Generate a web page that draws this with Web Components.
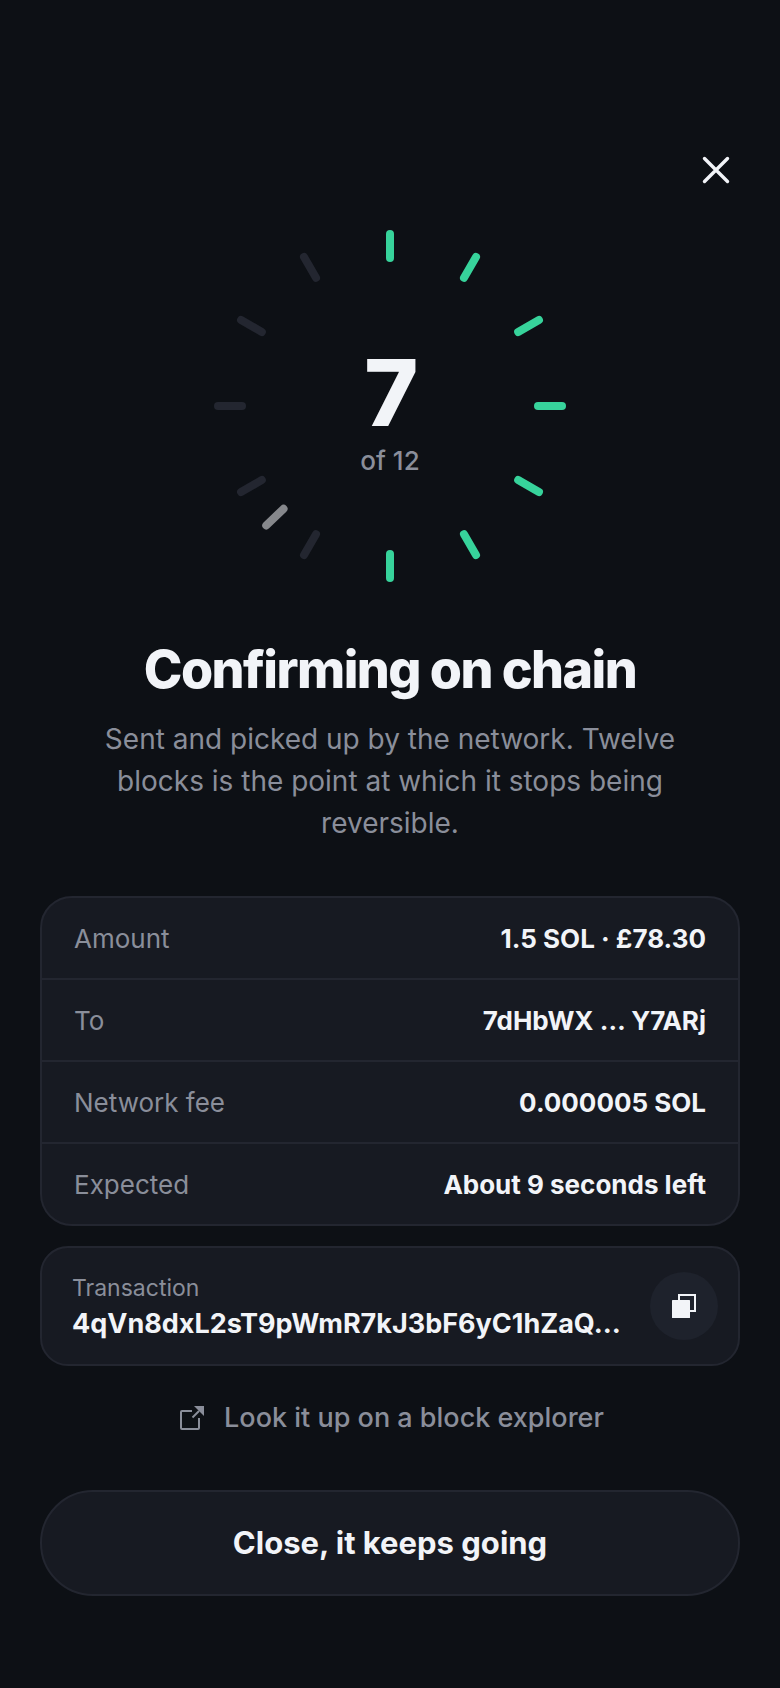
<!DOCTYPE html>
<html lang="en">
<head>
    <meta charset="utf-8">
    <meta name="viewport" content="width=device-width, initial-scale=1">
    <title>Confirming on chain</title>
    <style>
        :root {
            --bg: #0d1015;
            --card: #171a22;
            --raised: #1e222c;
            --line: #232630;
            --text: #f2f4f8;
            --muted: #8a8e9a;
            --accent: #37d39b;
            --display-tracking: -0.03em;
        }

        body {
            margin: 0;
            min-height: 100vh;
            background: var(--bg);
            color: var(--text);
            font-family: Inter, "Liberation Sans", sans-serif;
        }
    </style>
</head>
<body>
    <confirm-screen>
        <close-button slot="top"></close-button>
        <block-dial done="7" total="12" sweep="226"></block-dial>
        <status-message heading="Confirming on chain">Sent and picked up by the network. Twelve blocks is the point at which it stops being reversible.</status-message>
        <detail-list>
            <detail-row label="Amount">1.5 SOL · £78.30</detail-row>
            <detail-row label="To">7dHbWX … Y7ARj</detail-row>
            <detail-row label="Network fee">0.000005 SOL</detail-row>
            <detail-row label="Expected">About 9 seconds left</detail-row>
        </detail-list>
        <transaction-card label="Transaction">4qVn8dxL2sT9pWmR7kJ3bF6yC1hZaQ…</transaction-card>
        <explorer-link href="#explorer">Look it up on a block explorer</explorer-link>
        <pill-button>Close, it keeps going</pill-button>
    </confirm-screen>

    <script>
        class ConfirmScreen extends HTMLElement {
            constructor() {
                super();
                this.attachShadow({ mode: "open" });
                this.shadowRoot.innerHTML = `
                    <style>
                        :host {
                            display: block;
                            padding: 134px 0 92px;
                        }

                        header {
                            display: flex;
                            justify-content: flex-end;
                            padding: 0 28px;
                            margin-bottom: 24px;
                        }

                        main {
                            display: flex;
                            flex-direction: column;
                            padding: 0 40px;
                        }
                    </style>
                    <header><slot name="top"></slot></header>
                    <main><slot></slot></main>
                `;
            }
        }

        class CloseButton extends HTMLElement {
            constructor() {
                super();
                this.attachShadow({ mode: "open" });
                this.shadowRoot.innerHTML = `
                    <style>
                        :host {
                            display: block;
                        }

                        button {
                            display: grid;
                            place-items: center;
                            width: 72px;
                            height: 72px;
                            padding: 0;
                            border: 0;
                            background: none;
                            color: inherit;
                            cursor: pointer;
                        }
                    </style>
                    <button type="button" aria-label="Close">
                        <svg width="28" height="28" viewBox="0 0 28 28" fill="none" stroke="currentColor" stroke-width="3.4" stroke-linecap="round">
                            <path d="M2.5 2.5l23 23M25.5 2.5l-23 23"/>
                        </svg>
                    </button>
                `;
            }
        }

        class BlockDial extends HTMLElement {
            constructor() {
                super();
                this.attachShadow({ mode: "open" });

                const done = Number(this.getAttribute("done")) || 0;
                const total = Number(this.getAttribute("total")) || 12;
                const sweep = this.getAttribute("sweep") || "0";

                // One tick per block, clockwise from the top
                const ticks = Array.from({ length: total }, (_, i) =>
                    `<rect class="${i < done ? "on" : "off"}" x="-4" y="-176" width="8" height="32" rx="4" transform="rotate(${(360 / total) * i})"/>`
                ).join("");

                this.shadowRoot.innerHTML = `
                    <style>
                        :host {
                            display: grid;
                            place-items: center;
                            margin-bottom: 56px;
                        }

                        svg, .count {
                            grid-area: 1 / 1;
                        }

                        svg {
                            display: block;
                        }

                        .on {
                            fill: var(--accent);
                        }

                        .off {
                            fill: var(--line);
                        }

                        .sweep {
                            fill: #86888c;
                        }

                        .count {
                            display: flex;
                            flex-direction: column;
                            align-items: center;
                            padding-top: 2px;
                        }

                        strong {
                            font-size: 92px;
                            font-weight: 800;
                            line-height: 108px;
                            letter-spacing: var(--display-tracking);
                        }

                        span {
                            font-size: 26px;
                            font-weight: 500;
                            line-height: 28px;
                            color: var(--muted);
                        }
                    </style>
                    <svg width="352" height="352" viewBox="-176 -176 352 352" aria-hidden="true">
                        ${ticks}
                        <rect class="sweep" x="-4" y="-176" width="8" height="32" rx="4" transform="rotate(${sweep})"/>
                    </svg>
                    <div class="count">
                        <strong>${done}</strong>
                        <span>of ${total}</span>
                    </div>
                `;
            }
        }

        class StatusMessage extends HTMLElement {
            constructor() {
                super();
                this.attachShadow({ mode: "open" });
                const heading = this.getAttribute("heading") || "";
                this.shadowRoot.innerHTML = `
                    <style>
                        :host {
                            display: block;
                            margin-bottom: 52px;
                            padding: 0 48px;
                            text-align: center;
                        }

                        h1 {
                            margin: 0 0 16px;
                            font-size: 52px;
                            font-weight: 800;
                            line-height: 64px;
                            letter-spacing: var(--display-tracking);
                        }

                        p {
                            margin: 0;
                            font-size: 28px;
                            line-height: 42px;
                            color: var(--muted);
                        }
                    </style>
                    <h1>${heading}</h1>
                    <p><slot></slot></p>
                `;
            }
        }

        class DetailList extends HTMLElement {
            constructor() {
                super();
                this.attachShadow({ mode: "open" });
                this.shadowRoot.innerHTML = `
                    <style>
                        :host {
                            display: flex;
                            flex-direction: column;
                            gap: 2px;
                            margin-bottom: 20px;
                            border: 2px solid var(--line);
                            border-radius: 32px;
                            background: var(--line);
                            overflow: hidden;
                        }
                    </style>
                    <slot></slot>
                `;
            }
        }

        class DetailRow extends HTMLElement {
            constructor() {
                super();
                this.attachShadow({ mode: "open" });
                const label = this.getAttribute("label") || "";
                this.shadowRoot.innerHTML = `
                    <style>
                        :host {
                            display: flex;
                            align-items: center;
                            justify-content: space-between;
                            gap: 20px;
                            padding: 25px 32px 23px;
                            background: var(--card);
                            font-size: 26px;
                            line-height: 32px;
                        }

                        .label {
                            color: var(--muted);
                        }

                        .value {
                            font-weight: 700;
                            text-align: right;
                        }
                    </style>
                    <span class="label">${label}</span>
                    <span class="value"><slot></slot></span>
                `;
            }
        }

        class TransactionCard extends HTMLElement {
            constructor() {
                super();
                this.attachShadow({ mode: "open" });
                const label = this.getAttribute("label") || "";
                this.shadowRoot.innerHTML = `
                    <style>
                        :host {
                            display: flex;
                            align-items: center;
                            gap: 20px;
                            padding: 22px 20px 22px 30px;
                            border: 2px solid var(--line);
                            border-radius: 28px;
                            background: var(--card);
                        }

                        .body {
                            flex: 1;
                            min-width: 0;
                            line-height: 36px;
                        }

                        .label {
                            font-size: 23px;
                            color: var(--muted);
                        }

                        .hash {
                            font-size: 27px;
                            font-weight: 700;
                            white-space: nowrap;
                            overflow: hidden;
                            text-overflow: ellipsis;
                        }

                        button {
                            display: grid;
                            place-items: center;
                            width: 68px;
                            height: 68px;
                            padding: 0;
                            border: 0;
                            border-radius: 50%;
                            background: var(--raised);
                            color: inherit;
                            cursor: pointer;
                        }
                    </style>
                    <div class="body">
                        <div class="label">${label}</div>
                        <div class="hash"><slot></slot></div>
                    </div>
                    <button type="button" aria-label="Copy transaction">
                        <svg width="24" height="24" viewBox="0 0 24 24">
                            <path d="M7 7V1h16v16h-6" fill="none" stroke="currentColor" stroke-width="2"/>
                            <rect y="6" width="18" height="18" rx="0.5" fill="currentColor"/>
                        </svg>
                    </button>
                `;
            }
        }

        class ExplorerLink extends HTMLElement {
            constructor() {
                super();
                this.attachShadow({ mode: "open" });
                const href = this.getAttribute("href") || "#";
                this.shadowRoot.innerHTML = `
                    <style>
                        :host {
                            display: flex;
                            justify-content: center;
                            margin: 20px 0 40px;
                        }

                        a {
                            display: flex;
                            align-items: center;
                            gap: 20px;
                            padding: 16px 16px 16px 20px;
                            font-size: 27px;
                            font-weight: 500;
                            line-height: 32px;
                            color: var(--muted);
                            text-decoration: none;
                        }
                    </style>
                    <a href="${href}">
                        <svg width="24" height="24" viewBox="0 0 24 24" fill="none" stroke="currentColor" stroke-width="2">
                            <path d="M12 5H2a1 1 0 0 0-1 1v16a1 1 0 0 0 1 1h16a1 1 0 0 0 1-1V12"/>
                            <path d="M12.5 11.5L19 5"/>
                            <path d="M14 0h10v10z" fill="currentColor" stroke="none"/>
                        </svg>
                        <slot></slot>
                    </a>
                `;
            }
        }

        class PillButton extends HTMLElement {
            constructor() {
                super();
                this.attachShadow({ mode: "open" });
                this.shadowRoot.innerHTML = `
                    <style>
                        :host {
                            display: block;
                        }

                        button {
                            width: 100%;
                            padding: 33px 32px;
                            border: 2px solid var(--line);
                            border-radius: 53px;
                            background: var(--card);
                            color: inherit;
                            font: inherit;
                            font-size: 31px;
                            font-weight: 700;
                            line-height: 36px;
                            cursor: pointer;
                        }
                    </style>
                    <button type="button"><slot></slot></button>
                `;
            }
        }

        // Register the custom elements
        customElements.define("confirm-screen", ConfirmScreen);
        customElements.define("close-button", CloseButton);
        customElements.define("block-dial", BlockDial);
        customElements.define("status-message", StatusMessage);
        customElements.define("detail-list", DetailList);
        customElements.define("detail-row", DetailRow);
        customElements.define("transaction-card", TransactionCard);
        customElements.define("explorer-link", ExplorerLink);
        customElements.define("pill-button", PillButton);
    </script>
</body>
</html>
